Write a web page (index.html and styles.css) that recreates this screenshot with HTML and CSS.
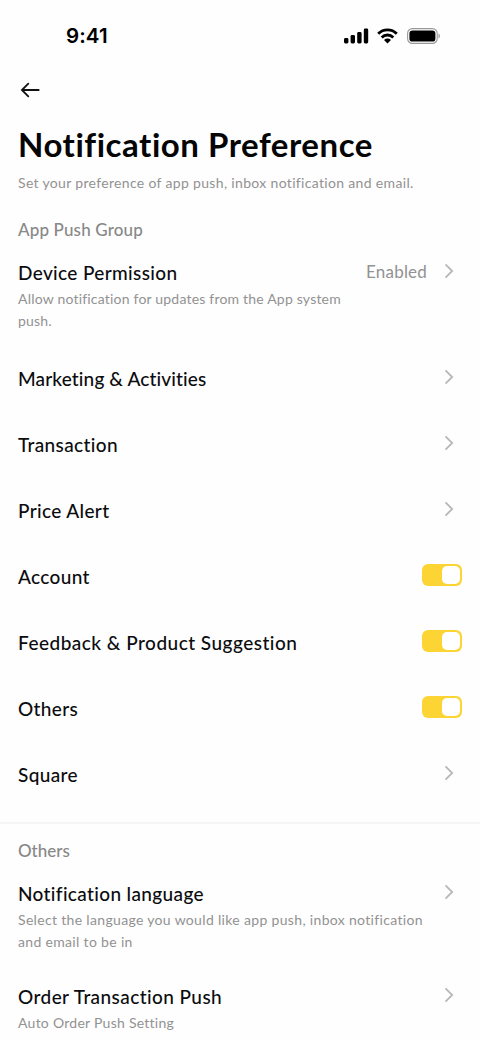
FILE: index.html
```html
<!DOCTYPE html>
<html lang="en">
<head>
<meta charset="utf-8">
<title>Notification Preference</title>
<link rel="stylesheet" href="styles.css">
</head>
<body>
<svg class="defs" width="0" height="0" aria-hidden="true">
  <symbol id="chevron" viewBox="0 0 10 16"><path d="M1.5 1.3 8.2 8l-6.7 6.7" fill="none" stroke="#b8b8b8" stroke-width="1.8"/></symbol>
</svg>
<header class="status">
  <span class="time">9:41</span>
  <div class="indicators">
    <svg class="signal" width="25" height="16" viewBox="0 0 25 16"><rect x="0" y="10" width="4.4" height="5.5" rx="1.4"/><rect x="6.6" y="7" width="4.4" height="8.5" rx="1.4"/><rect x="13.2" y="4" width="4.4" height="11.5" rx="1.4"/><rect x="19.8" y=".5" width="4.4" height="15" rx="1.4"/></svg>
    <svg class="wifi" width="21" height="16" viewBox="0 0 21 16"><g fill="none" stroke="#000" stroke-width="2.8"><path d="M1.2 5.7a13.2 13.2 0 0 1 18.6 0"/><path d="M4.7 9.4a8.2 8.2 0 0 1 11.6 0"/></g><path d="M7 11.9a5.1 5.1 0 0 1 7 0L10.5 15.5z"/></svg>
    <svg class="battery" width="34" height="16" viewBox="0 0 34 16"><rect x=".6" y=".6" width="29.6" height="14.8" rx="4.8" fill="none" stroke="#999" stroke-width="1.1"/><rect x="2.4" y="2.4" width="26" height="11.2" rx="3.2"/><path d="M31.5 5.5c1.8.6 1.8 4.4 0 5z" fill="#999"/></svg>
  </div>
</header>
<nav class="nav">
  <svg width="20" height="16" viewBox="0 0 20 16"><path d="M18.7 8H1.9M8.3 1.6 1.9 8l6.4 6.4" fill="none" stroke="#111" stroke-width="1.8" stroke-linecap="round"/></svg>
</nav>
<main>
  <h1 class="heading">Notification Preference</h1>
  <p class="desc intro">Set your preference of app push, inbox notification and email.</p>
  <section class="group">
    <h2 class="label">App Push Group</h2>
    <div class="row detailed">
      <div class="copy"><h3 class="title">Device Permission</h3><p class="desc">Allow notification for updates from the App system<br>push.</p></div>
      <div class="action"><span class="value">Enabled</span><svg class="chevron"><use href="#chevron"/></svg></div>
    </div>
    <div class="row marketing"><h3 class="title">Marketing &amp; Activities</h3><div class="action"><svg class="chevron"><use href="#chevron"/></svg></div></div>
    <div class="row"><h3 class="title">Transaction</h3><div class="action"><svg class="chevron"><use href="#chevron"/></svg></div></div>
    <div class="row"><h3 class="title">Price Alert</h3><div class="action"><svg class="chevron"><use href="#chevron"/></svg></div></div>
    <div class="row"><h3 class="title">Account</h3><span class="toggle"></span></div>
    <div class="row feedback"><h3 class="title">Feedback &amp; Product Suggestion</h3><span class="toggle"></span></div>
    <div class="row"><h3 class="title">Others</h3><span class="toggle"></span></div>
    <div class="row"><h3 class="title">Square</h3><div class="action"><svg class="chevron"><use href="#chevron"/></svg></div></div>
  </section>
  <section class="group others">
    <h2 class="label">Others</h2>
    <div class="row language">
      <div class="copy"><h3 class="title">Notification language</h3><p class="desc">Select the language you would like app push, inbox notification<br>and email to be in</p></div>
      <div class="action"><svg class="chevron"><use href="#chevron"/></svg></div>
    </div>
    <div class="row order">
      <div class="copy"><h3 class="title">Order Transaction Push</h3><p class="desc">Auto Order Push Setting</p></div>
      <div class="action"><svg class="chevron"><use href="#chevron"/></svg></div>
    </div>
  </section>
</main>
</body>
</html>
```
FILE: styles.css
```css
* { box-sizing: border-box; }
body { margin: 0; height: 1040px; overflow: hidden; background: #fefefe; color: #0b0c0e; font-family: Lato, "Open Sans", sans-serif; font-variant-ligatures: none; }
h1, h2, h3, p { margin: 0; white-space: nowrap; }
.defs { display: block; height: 0; }
.status { height: 72px; padding: 0 39px 0 66px; display: flex; align-items: center; justify-content: space-between; }
.time { font: 600 20.5px/24px Inter, sans-serif; letter-spacing: .1px; color: #000; }
.indicators { display: flex; align-items: center; gap: 8px; }
.battery { margin-left: 1px; }
.nav { height: 51px; padding: 10px 20px; }
.nav svg { display: block; }
.heading { height: 43px; padding-left: 18px; font-size: 33px; line-height: 42px; font-weight: 700; letter-spacing: .53px; color: #050505; }
.desc { margin-top: 2px; color: #929292; font-size: 14px; line-height: 22px; letter-spacing: .33px; }
.intro { padding-left: 18px; margin-top: 6px; }
.group { padding: 0 18px; }
.label { padding-top: 24px; height: 66px; font-size: 17px; line-height: 24px; font-weight: 500; letter-spacing: .15px; color: #888; }
.row { display: flex; justify-content: space-between; align-items: flex-start; margin-bottom: 40px; }
.title { font-size: 19px; line-height: 26px; font-weight: 500; letter-spacing: .36px; }
.detailed { margin-bottom: 34px; }
.detailed .desc { letter-spacing: .2px; }
.marketing .title { letter-spacing: .14px; }
.feedback .title { letter-spacing: .48px; }
.action { height: 22px; display: flex; align-items: center; gap: 17px; padding-right: 8px; }
.value { color: #929292; font-size: 17px; line-height: 24px; padding-top: 2px; letter-spacing: .2px; }
.chevron { display: block; width: 10px; height: 16px; }
.toggle { width: 40px; height: 22px; border-radius: 6px; background: #fcd535; padding: 2px; display: flex; justify-content: flex-end; }
.toggle::after { content: ""; width: 18px; height: 18px; border-radius: 5px; background: #fff; }
.others { border-top: 2px solid #f5f5f5; margin-top: -6px; }
.others .label { padding-top: 15px; height: 57px; letter-spacing: 0; }
.language { margin-bottom: 31px; }
.order .title { letter-spacing: .42px; }
.order .desc { letter-spacing: .26px; }
```
